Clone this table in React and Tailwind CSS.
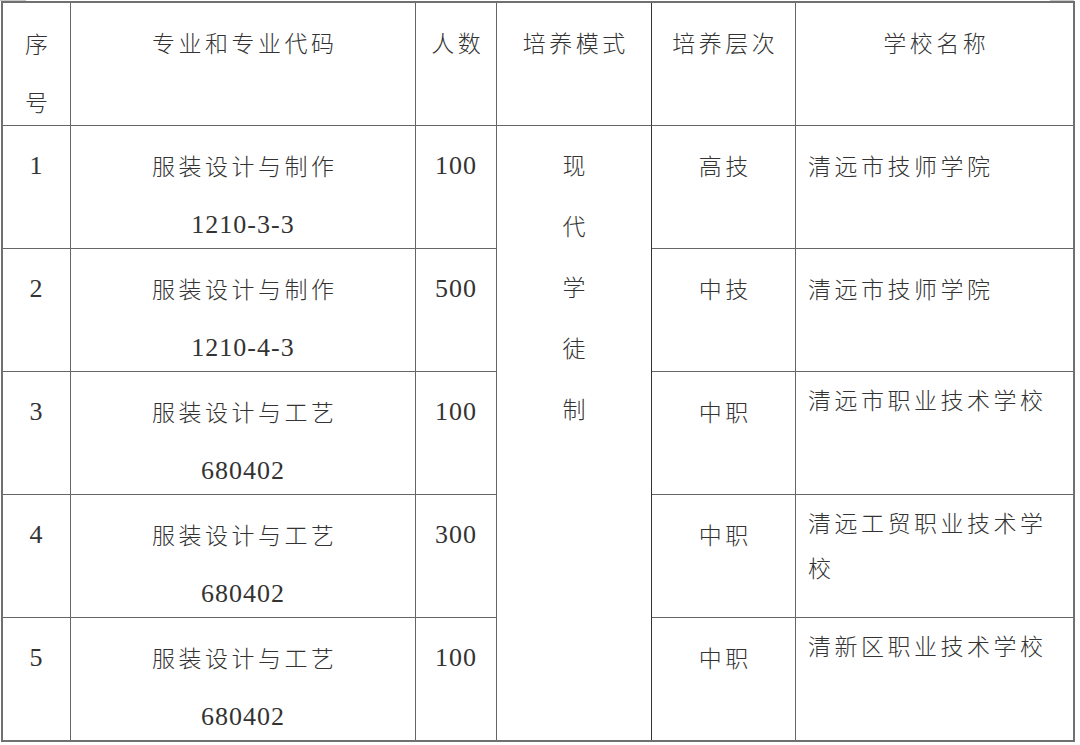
import React from "react";

const cjk = "font-['Noto_Sans_CJK_SC',sans-serif] text-[23px] tracking-[3.5px] font-light";
const serif = "font-['Liberation_Serif',serif] text-[26px] tracking-[1px]";

const rows = [
  { n: "1", major: "服装设计与制作", code: "1210-3-3", num: "100", level: "高技", school: "清远市技师学院", tall: true },
  { n: "2", major: "服装设计与制作", code: "1210-4-3", num: "500", level: "中技", school: "清远市技师学院", tall: true },
  { n: "3", major: "服装设计与工艺", code: "680402", num: "100", level: "中职", school: "清远市职业技术学校" },
  { n: "4", major: "服装设计与工艺", code: "680402", num: "300", level: "中职", school: "清远工贸职业技术学校" },
  { n: "5", major: "服装设计与工艺", code: "680402", num: "100", level: "中职", school: "清新区职业技术学校" },
];

function Cell({ children, className = "", last = false, lastCol = false }) {
  return (
    <div
      className={
        "border-[#666] " +
        (last ? "" : "border-b ") +
        (lastCol ? "" : "border-r ") +
        className
      }
    >
      {children}
    </div>
  );
}

export default function App() {
  return (
    <div className="w-[1080px] h-[745px] bg-white text-[#333] overflow-hidden">
      <div className="flex h-[1px]">
        <div className="w-[26px] bg-[#c8c8c8]" />
        <div className="w-[1024px]" />
        <div className="w-[24px] bg-[#c8c8c8]" />
      </div>
      <div className="ml-[1px] w-[1074px] border-2 border-[#707070]">
        <div className="grid grid-cols-[68px_345px_81px_155px_144px_277px] grid-rows-[123px_123px_123px_123px_123px_122px]">
          {/* header */}
          <Cell className={"flex flex-col items-center pt-[11px] leading-[58px] " + cjk}>
            <div className="pl-[3.5px]">序</div>
            <div className="pl-[3.5px]">号</div>
          </Cell>
          <Cell className={"text-center pt-[10px] leading-[59px] " + cjk}>
            <span className="pl-[3.5px]">专业和专业代码</span>
          </Cell>
          <Cell className={"text-center pt-[10px] leading-[59px] " + cjk}>
            <span className="pl-[3.5px]">人数</span>
          </Cell>
          <Cell className={"text-center pt-[10px] leading-[59px] border-r-[#333] " + cjk}>
            <span className="pl-[3.5px]">培养模式</span>
          </Cell>
          <Cell className={"text-center pt-[10px] leading-[59px] " + cjk}>
            <span className="pl-[3.5px]">培养层次</span>
          </Cell>
          <Cell lastCol className={"text-center pt-[10px] leading-[59px] " + cjk}>
            <span className="pl-[3.5px]">学校名称</span>
          </Cell>

          {/* spanning column */}
          <div className={"col-start-4 row-start-2 row-span-5 border-r border-[#333] flex flex-col items-center pt-[8px] leading-[61px] " + cjk}>
            {"现代学徒制".split("").map((c) => (
              <div key={c} className="pl-[3.5px]">{c}</div>
            ))}
          </div>

          {rows.map((r, i) => {
            const last = i === rows.length - 1;
            return (
              <React.Fragment key={r.n}>
                <Cell last={last} className={"text-center pt-[10px] leading-[59px] " + serif}>
                  {r.n}
                </Cell>
                <Cell last={last} className="flex flex-col items-center pt-[10px] leading-[59px]">
                  <div className={"pl-[3.5px] " + cjk}>{r.major}</div>
                  <div className={serif}>{r.code}</div>
                </Cell>
                <Cell last={last} className={"text-center pt-[10px] leading-[59px] " + serif}>
                  {r.num}
                </Cell>
                <Cell last={last} className={"text-center pt-[10px] leading-[59px] " + cjk}>
                  <span className="pl-[3.5px]">{r.level}</span>
                </Cell>
                <Cell
                  last={last}
                  lastCol
                  className={
                    "pl-[12px] pr-[8px] " +
                    (r.tall ? "pt-[10px] leading-[59px] " : "pt-[5px] leading-[45px] ") +
                    cjk
                  }
                >
                  {r.school}
                </Cell>
              </React.Fragment>
            );
          })}
        </div>
      </div>
    </div>
  );
}
